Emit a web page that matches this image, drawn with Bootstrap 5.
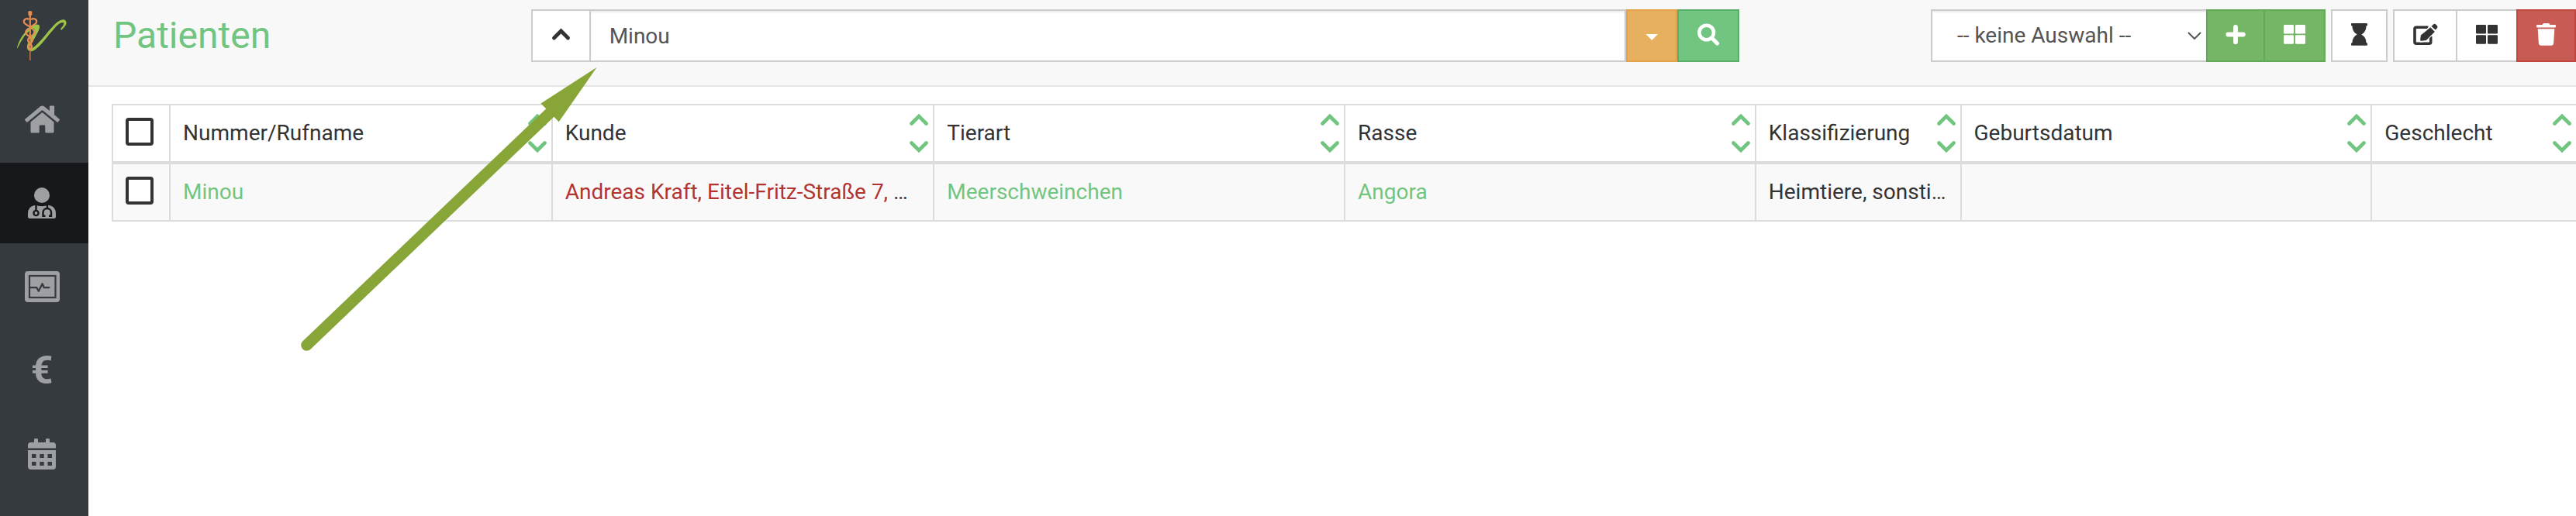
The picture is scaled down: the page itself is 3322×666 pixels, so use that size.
<!DOCTYPE html>
<html lang="de">
<head>
<meta charset="utf-8">
<meta name="viewport" content="width=device-width, initial-scale=1">
<title>Patienten</title>
<link href="https://cdn.jsdelivr.net/npm/bootstrap@5.3.0/dist/css/bootstrap.min.css" rel="stylesheet">
<style>
  :root { --line: #ccc; --grid-line: #dcdcdc; --brand: #72c580; --ink: #333; }
  body { font-family: Roboto, "Liberation Sans", sans-serif; font-size: 28px; line-height: 40px; color: var(--ink); background: #fff; }
  a { color: var(--brand); text-decoration: none; }
  svg { display: block; flex: none; overflow: visible; }

  .side { width: 114px; background: #353a3e; }
  .side .brand { height: 102px; padding: 14px 0 0 21px; }
  .side .nav { gap: 4px; }
  .side .nav-link { height: 104px; padding: 0 6px 0 0; color: #9d9fa2; }
  .side .nav-link.active { background: #17181c; }
  .euro { font-size: 50px; font-weight: 700; line-height: 48px; }

  .topbar { padding: 12px 0 30px 30px; background: #f8f8f8; border-bottom: 2px solid #e5e5e5; }
  .topbar h1 { padding-left: 2px; font-size: 48px; line-height: 56px; font-weight: 400; color: var(--brand); }
  .search-col { padding: 0 20px 0 11px; }

  .tool { display: flex; align-items: center; height: 68px; padding: 0 24px; border: 2px solid var(--line); border-radius: 0; background: #fff; color: var(--ink); }
  .tool:hover { background: #eee; color: var(--ink); }
  .joined { margin-right: -2px; }
  .tool-search, .tool-search:hover { background: var(--brand); border-color: #59ae69; color: #fff; }
  .tool-filter, .tool-filter:hover { background: #e6b05f; border-color: #e3a34a; color: #fff; }
  .tool-new, .tool-new:hover { background: #74b566; border-color: #63aa57; color: #fff; }
  .tool-delete, .tool-delete:hover { background: #c95b55; border-color: #c1463d; color: #fff; z-index: 1; }
  .field { height: 68px; border: 2px solid var(--line); border-radius: 0; font-size: 28px; line-height: 40px; color: #555; box-shadow: inset 0 2px 2px rgba(0,0,0,.075); }
  .field:focus { color: #555; }
  .search-field { min-width: 0; padding: 0 24px; }
  .select-field { width: 355px; padding: 0 40px 0 32px; border-right: 0;
    background: #fff url("data:image/svg+xml,%3Csvg xmlns='http://www.w3.org/2000/svg' viewBox='0 0 18 10'%3E%3Cpath d='M1 1l8 8 8-8' fill='none' stroke='%23555' stroke-width='2'/%3E%3C/svg%3E") no-repeat right 6px center / 18px 10px; }
  .tools { gap: 7px; }

  .list { margin: 22px -2px 0 30px; }
  .grid { width: 100%; table-layout: fixed; border-collapse: separate; border-spacing: 0; border: solid var(--grid-line); border-width: 2px 0 0 2px; }
  .grid th, .grid td { height: 74px; padding: 0 16px; border: solid var(--grid-line); border-width: 0 2px 2px 0; font-weight: 400; white-space: nowrap; overflow: hidden; vertical-align: middle; }
  .grid th { height: 76px; border-bottom-width: 4px; }
  .grid tbody td { background: #f9f9f9; }
  .grid th.sortable { padding-right: 6px; }
  .c-check { width: 74px; } .c-wide { width: 16.67%; } .c-mid { width: 15.5%; } .c-small { width: 8.33%; }
  .sort { padding: 0; border: 0; background: none; color: var(--brand); }
  .tick { display: block; appearance: none; width: 36px; height: 36px; margin: 0 0 4px; border: 4px solid var(--ink); border-radius: 4px; background: #fff; }
  .tick:checked { background: var(--brand); }
  .kunde { color: #b23431; }
  .pointer { left: 388px; top: 87px; pointer-events: none; z-index: 5; }
</style>
</head>
<body>
<svg width="0" height="0" class="position-absolute" aria-hidden="true">
  <symbol id="i-sort" viewBox="0 0 24 50"><path d="M2.500 12.500L12 3l9.500 9.500M2.500 37.500L12 47l9.500-9.500" fill="none" stroke="currentColor" stroke-width="4.600" stroke-linecap="round"/></symbol>
  <symbol id="i-tiles" viewBox="0 0 28 32"><g fill="currentColor"><rect y="2" width="13" height="11.500" rx="1.200"/><rect x="15" y="2" width="13" height="11.500" rx="1.200"/><rect y="15.300" width="13" height="11.500" rx="1.200"/><rect x="15" y="15.300" width="13" height="11.500" rx="1.200"/></g></symbol>
</svg>

<div class="d-flex min-vh-100 position-relative">
  <aside class="side flex-shrink-0">
    <a class="brand d-block" href="#" aria-label="Startseite">
      <svg width="65" height="64" viewBox="21 14 65 64" fill="none">
        <path d="M22 63C22 57 28 46 34 40C40 33 46 30 50 32C52 34 51 38 48 43L41 56C38 62 39 64 42 62C50 57 62 40 70 32C76 26 81 24 84 26C87 29 86 33 79 39C78 38 78 37 79 36C83 32 83 29 81 29C77 29 73 33 69 38C61 47 52 60 44 65C39 68 34 65 35 59C36 54 42 47 44 40C45 36 43 36 39 39C31 45 27 54 22 63Z" fill="#9dc447"/>
        <path d="M38.800 17V50" stroke="#d9824c" stroke-width="2.400"/><path d="M38.800 50V78" stroke="#b36f45" stroke-width="1.700"/>
        <path d="M36.300 15q2.500-2 5 0v4l-2.500 2.500-2.500-2.500z" fill="#e58d52"/>
        <path d="M37.500 25C34 23 30 25 31 29C33 33 45 36 44.500 42C43 47 36 47 36 52C36 56 42 56 41 61L38.800 65M40 25C44 23 48 25 47 29C45 33 33 36 33 42C34 47 42 47 42 52C42 56 36 56 37 61L38.800 65" stroke="#e58d52" stroke-width="2.200"/>
      </svg>
    </a>
    <nav class="nav flex-column">
      <a class="nav-link d-flex align-items-center justify-content-center" href="#" aria-label="Start">
        <svg width="45" height="40" viewBox="0 0 576 512" fill="currentColor"><path d="M280.370 148.260L96 300.110V464a16 16 0 0 0 16 16l112.060-.29a16 16 0 0 0 15.920-16V368a16 16 0 0 1 16-16h64a16 16 0 0 1 16 16v95.640a16 16 0 0 0 16 16.050L464 480a16 16 0 0 0 16-16V300L295.670 148.260a12.190 12.190 0 0 0-15.300 0zM571.600 251.470L488 182.560V44.050a12 12 0 0 0-12-12h-56a12 12 0 0 0-12 12v72.610L318.470 43a48 48 0 0 0-61 0L4.340 251.470a12 12 0 0 0-1.600 16.900l25.500 31A12 12 0 0 0 45.150 301l235.220-193.740a12.190 12.190 0 0 1 15.300 0L530.900 301a12 12 0 0 0 16.900-1.600l25.500-31a12 12 0 0 0-1.700-16.930z"/></svg>
      </a>
      <a class="nav-link active d-flex align-items-center justify-content-center" href="#" aria-label="Patienten" aria-current="page">
        <svg width="36" height="40" viewBox="0 0 36 40"><g fill="currentColor"><circle cx="18" cy="10" r="10"/><path d="M9.500 22.800Q0 24 0 34v3.500Q0 40 2.500 40h31q2.500 0 2.500-2.500V34q0-10-9.500-11.200Q18 25.500 9.500 22.800z"/></g><g fill="none" stroke="#17181c" stroke-width="2.400"><circle cx="10.500" cy="33" r="3.100"/><path d="M10.500 30v-8M25 22v5.500M22.500 36.800h-3v-4.500a5.200 5.200 0 0 1 10.500 0v4.500h-3"/></g></svg>
      </a>
      <a class="nav-link d-flex align-items-center justify-content-center" href="#" aria-label="Behandlung">
        <svg width="45" height="40" viewBox="0 0 45 40"><rect width="45" height="40" rx="4" fill="currentColor"/><rect x="6" y="6" width="33.500" height="28" fill="none" stroke="#353a3e" stroke-width="2.200"/><path d="M7 21.200h8.300l2.500 4.500 4.800-9.500 2.200 5h6.500" fill="none" stroke="#353a3e" stroke-width="2.300" stroke-linecap="round" stroke-linejoin="round"/></svg>
      </a>
      <a class="nav-link d-flex align-items-center justify-content-center" href="#" aria-label="Finanzen"><span class="euro">€</span></a>
      <a class="nav-link d-flex align-items-center justify-content-center" href="#" aria-label="Kalender">
        <svg width="36" height="40" viewBox="0 0 36 40" fill="currentColor"><path d="M8 5V1.200Q8 0 9.200 0h2.600Q13 0 13 1.200V5h10V1.200Q23 0 24.200 0h2.600Q28 0 28 1.200V5h4.300Q36 5 36 8.700v3.800H0V8.700Q0 5 3.700 5z"/><path fill-rule="evenodd" d="M0 15h36v21.300q0 3.700-3.700 3.700H3.700Q0 40 0 36.300zM5 20v5h5.500v-5zM15.300 20v5h5.400v-5zM25.500 20v5H31v-5zM5 30v5h5.500v-5zM15.300 30v5h5.400v-5zM25.500 30v5H31v-5z"/></svg>
      </a>
    </nav>
  </aside>

  <main class="flex-grow-1 overflow-hidden">
    <header class="topbar">
      <div class="row g-0 align-items-center">
        <div class="col-2"><h1 class="m-0">Patienten</h1></div>
        <form class="col-6 search-col d-flex" role="search">
          <button type="button" class="btn tool joined" aria-label="Suche einklappen"><svg width="25" height="32" viewBox="0 0 25 32"><path d="M3.500 19L12.500 10l9 9" fill="none" stroke="currentColor" stroke-width="4.800" stroke-linecap="round"/></svg></button>
          <input type="text" class="form-control field search-field flex-fill" value="Minou" aria-label="Suche">
          <button type="button" class="btn tool tool-filter" aria-label="Filter"><svg width="14" height="32" viewBox="0 0 14 32"><path d="M-.5 14h15.500l-7.700 8z" fill="currentColor"/></svg></button>
          <button type="submit" class="btn tool tool-search" aria-label="Suchen"><svg width="28" height="32" viewBox="0 0 28 32" fill="none" stroke="currentColor"><circle cx="11.700" cy="12" r="9.300" stroke-width="4.600"/><path d="M18.500 19l7 7" stroke-width="5.200" stroke-linecap="round"/></svg></button>
        </form>
        <div class="col-4 tools d-flex justify-content-end">
          <div class="d-flex">
            <select class="form-select field select-field" aria-label="Auswahl"><option>-- keine Auswahl --</option></select>
            <button type="button" class="btn tool tool-new joined" aria-label="Neu"><svg width="24" height="32" viewBox="0 0 24 32"><path d="M12 4.800v19.500M2.300 14.500h19.500" stroke="currentColor" stroke-width="5.800" stroke-linecap="round"/></svg></button>
            <button type="button" class="btn tool tool-new" aria-label="Neu aus Vorlage"><svg width="28" height="32"><use href="#i-tiles"/></svg></button>
          </div>
          <button type="button" class="btn tool" aria-label="Verlauf"><svg width="21" height="32" viewBox="0 0 21 32" fill="currentColor"><path d="M1 0h19q1 0 1 1v1.500q0 1-1.500 1C19.500 9 17 12.500 13.200 14.400C17 16.500 19.500 20 19.500 25.200q1.500 0 1.500 1v1.500q0 1-1 1H1q-1 0-1-1v-1.500q0-1 1.500-1C1.500 20 4 16.500 7.800 14.400C4 12.500 1.500 9 1.500 3.500Q0 3.500 0 2.500V1q0-1 1-1z"/></svg></button>
          <div class="d-flex">
            <button type="button" class="btn tool joined" aria-label="Bearbeiten"><svg width="31" height="32" viewBox="0 0 31 32"><path d="M19.500 5.300H4q-2 0-2 2v17q0 2 2 2h16.700q2 0 2-2V17" fill="none" stroke="currentColor" stroke-width="3.600"/><path d="M21 3.500l8 8L16.500 23.800l-6.600.8q-1.600.2-1.400-1.400l.8-6.600z" fill="#fff"/><path d="M22.300 5.300l5.600 5.600-11 11-6.300.8q-1.700.2-1.500-1.500l.8-5.600zM23.500 4l2.300-2.300q1.800-1.800 3.600 0l1.300 1.300q1.800 1.800 0 3.600l-2 2z" fill="currentColor"/></svg></button>
            <button type="button" class="btn tool joined" aria-label="Kacheln"><svg width="28" height="32"><use href="#i-tiles"/></svg></button>
            <button type="button" class="btn tool tool-delete position-relative" aria-label="Löschen"><svg width="25" height="32" viewBox="0 0 25 32" fill="currentColor"><path d="M1 2h6.500l1-1.500Q9 0 9.800 0h5.400q.8 0 1.300.5l1 1.500H24q1 0 1 1v1.500q0 1-1 1H1q-1 0-1-1V3q0-1 1-1zM1.700 7.300h21.600l-1.200 19q-.2 2.400-2.600 2.400h-14q-2.400 0-2.600-2.400z"/></svg></button>
          </div>
        </div>
      </div>
    </header>

    <section class="list">
      <table class="grid">
        <colgroup><col class="c-check"><col class="c-mid"><col class="c-mid"><col class="c-wide"><col class="c-wide"><col class="c-small"><col class="c-wide"><col class="c-small"></colgroup>
        <thead>
          <tr>
            <th><input type="checkbox" class="tick" aria-label="Alle auswählen"></th>
            <th class="sortable"><div class="d-flex align-items-center justify-content-between">Nummer/Rufname<button type="button" class="sort" aria-label="Nach Nummer sortieren"><svg width="24" height="50"><use href="#i-sort"/></svg></button></div></th>
            <th class="sortable"><div class="d-flex align-items-center justify-content-between">Kunde<button type="button" class="sort" aria-label="Nach Kunde sortieren"><svg width="24" height="50"><use href="#i-sort"/></svg></button></div></th>
            <th class="sortable"><div class="d-flex align-items-center justify-content-between">Tierart<button type="button" class="sort" aria-label="Nach Tierart sortieren"><svg width="24" height="50"><use href="#i-sort"/></svg></button></div></th>
            <th class="sortable"><div class="d-flex align-items-center justify-content-between">Rasse<button type="button" class="sort" aria-label="Nach Rasse sortieren"><svg width="24" height="50"><use href="#i-sort"/></svg></button></div></th>
            <th class="sortable"><div class="d-flex align-items-center justify-content-between">Klassifizierung<button type="button" class="sort" aria-label="Nach Klassifizierung sortieren"><svg width="24" height="50"><use href="#i-sort"/></svg></button></div></th>
            <th class="sortable"><div class="d-flex align-items-center justify-content-between">Geburtsdatum<button type="button" class="sort" aria-label="Nach Geburtsdatum sortieren"><svg width="24" height="50"><use href="#i-sort"/></svg></button></div></th>
            <th class="sortable"><div class="d-flex align-items-center justify-content-between">Geschlecht<button type="button" class="sort" aria-label="Nach Geschlecht sortieren"><svg width="24" height="50"><use href="#i-sort"/></svg></button></div></th>
          </tr>
        </thead>
        <tbody>
          <tr>
            <td><input type="checkbox" class="tick" aria-label="Minou auswählen"></td>
            <td><a href="#">Minou</a></td>
            <td><a href="#" class="kunde">Andreas Kraft, Eitel-Fritz-Straße 7,</a> …</td>
            <td><a href="#">Meerschweinchen</a></td>
            <td><a href="#">Angora</a></td>
            <td>Heimtiere, sonsti…</td>
            <td></td>
            <td></td>
          </tr>
        </tbody>
      </table>
    </section>
  </main>

  <svg class="pointer position-absolute" width="382" height="366" viewBox="388 87 382 366" aria-hidden="true">
    <path d="M395.500 445.500L712 143" stroke="#88a537" stroke-width="14.500" stroke-linecap="round"/>
    <path d="M769.500 87L697.500 133.500L720.700 157.300z" fill="#88a537"/>
  </svg>
</div>
<script src="https://cdn.jsdelivr.net/npm/bootstrap@5.3.0/dist/js/bootstrap.bundle.min.js"></script>
</body>
</html>
